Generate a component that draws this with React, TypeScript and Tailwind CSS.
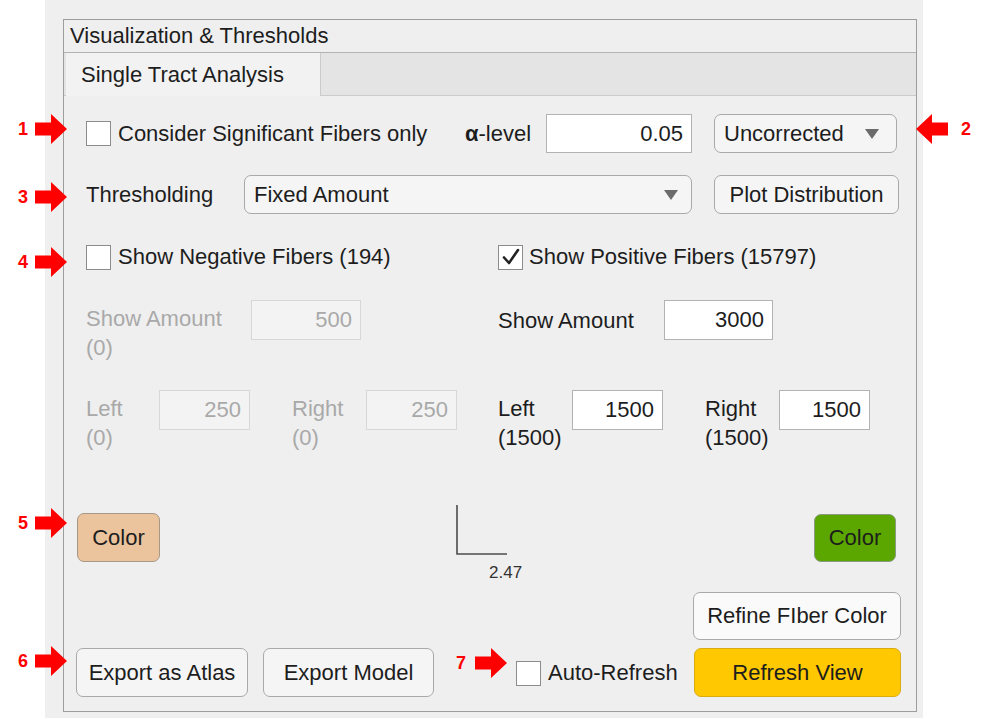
import React from "react";

const Tri = () => (
  <svg width="14" height="10" viewBox="0 0 14 10" className="shrink-0">
    <polygon points="0,0 14,0 7,10" fill="#6b6b6b" />
  </svg>
);

const Check = ({ checked = false }: { checked?: boolean }) => (
  <div className="w-[25px] h-[25px] shrink-0 bg-white border-[1.5px] border-[#8c8c8c] flex items-center justify-center">
    {checked && (
      <svg width="20" height="18" viewBox="0 0 20 18">
        <path d="M3 9.5 L8 15 L17 2" fill="none" stroke="#222" strokeWidth="2.6" strokeLinecap="round" strokeLinejoin="round" />
      </svg>
    )}
  </div>
);

const Arrow = ({ left = false }: { left?: boolean }) => (
  <svg width="32" height="30" viewBox="0 0 32 30" style={{ transform: left ? "scaleX(-1)" : undefined }}>
    <polygon points="0,8.5 16,8.5 16,0 32,15 16,30 16,21.5 0,21.5" fill="#ff0000" />
  </svg>
);

const Num = ({ children }: { children: React.ReactNode }) => (
  <span className="text-[#ff0000] font-bold text-[18px] leading-none font-['Liberation_Sans',Arial,sans-serif]">{children}</span>
);

const Field = ({ value, w, disabled = false }: { value: string; w: string; disabled?: boolean }) => (
  <div
    className={
      "h-[40px] shrink-0 flex items-center justify-end pr-[8px] border " +
      w +
      (disabled ? " bg-[#f3f3f3] border-[#d7d7d7] text-[#a9a9a9]" : " bg-white border-[#b3b3b3] text-[#1d1d1d]")
    }
  >
    {value}
  </div>
);

export default function App() {
  return (
    <div className="relative w-[988px] h-[718px] bg-white overflow-hidden text-[22px] text-[#1d1d1d] font-['Liberation_Sans',Arial,sans-serif] leading-none">
      <div className="ml-[45px] w-[878px] h-[718px] bg-[#efefef] pt-[19px] pl-[18px]">
        <div className="w-[854px] h-[693px] border border-[#9d9d9d] flex flex-col">
          <div className="h-[33px] border-b border-[#b3b3b3] pl-[6px] flex items-center">Visualization &amp; Thresholds</div>
          <div className="h-[43px] flex bg-[#e4e4e4] border-b border-[#cbcbcb] pl-[2px]">
            <div className="w-[255px] h-[43px] bg-[#f2f2f2] border-r border-[#cbcbcb] pl-[15px] flex items-center">
              Single Tract Analysis
            </div>
          </div>
          <div className="flex-1 flex flex-col pl-[13px] pr-[15px]">
            {/* Row 1 */}
            <div className="mt-[18px] h-[39px] flex items-center">
              <div className="w-[388px] pl-[9px] flex items-center">
                <Check />
                <span className="ml-[7px]">Consider Significant Fibers only</span>
              </div>
              <span className="w-[81px]">
                <b>α</b>-level
              </span>
              <div className="w-[146px] h-[39px] bg-white border border-[#b3b3b3] flex items-center justify-end pr-[8px]">0.05</div>
              <div className="ml-[22px] w-[183px] h-[39px] rounded-[7px] bg-[#f5f5f5] border border-[#a9a9a9] flex items-center justify-between pl-[9px] pr-[17px]">
                <span>Uncorrected</span>
                <Tri />
              </div>
            </div>
            {/* Row 2 */}
            <div className="mt-[22px] h-[39px] flex items-center">
              <span className="w-[167px] pl-[9px]">Thresholding</span>
              <div className="w-[448px] h-[39px] rounded-[7px] bg-[#f5f5f5] border border-[#a9a9a9] flex items-center justify-between pl-[9px] pr-[13px]">
                <span>Fixed Amount</span>
                <Tri />
              </div>
              <div className="ml-[22px] w-[185px] h-[39px] rounded-[7px] bg-[#f5f5f5] border border-[#a9a9a9] flex items-center justify-center">
                Plot Distribution
              </div>
            </div>
            {/* Row 3 */}
            <div className="mt-[30px] h-[26px] flex items-center">
              <div className="w-[421px] pl-[9px] flex items-center">
                <Check />
                <span className="ml-[7px]">Show Negative Fibers (194)</span>
              </div>
              <div className="flex items-center">
                <Check checked />
                <span className="ml-[6px]">Show Positive Fibers (15797)</span>
              </div>
            </div>
            {/* Row 4 */}
            <div className="mt-[30px] h-[90px] flex items-start">
              <div className="w-[421px] pl-[9px] flex items-start">
                <div className="w-[165px] pt-[4px] leading-[29px] text-[#a9a9a9]">
                  <div>Show Amount</div>
                  <div>(0)</div>
                </div>
                <Field value="500" w="w-[110px]" disabled />
              </div>
              <div className="flex items-start">
                <div className="w-[166px] pt-[6px] leading-[29px]">Show Amount</div>
                <Field value="3000" w="w-[109px]" />
              </div>
            </div>
            {/* Row 5 */}
            <div className="h-[115px] flex items-start">
              <div className="w-[421px] pl-[9px] flex items-start text-[#a9a9a9]">
                <div className="w-[73px] pt-[4px] leading-[29px]">
                  <div>Left</div>
                  <div>(0)</div>
                </div>
                <Field value="250" w="w-[91px]" disabled />
                <div className="ml-[42px] w-[74px] pt-[4px] leading-[29px]">
                  <div>Right</div>
                  <div>(0)</div>
                </div>
                <Field value="250" w="w-[91px]" disabled />
              </div>
              <div className="flex items-start">
                <div className="w-[74px] pt-[4px] leading-[29px]">
                  <div>Left</div>
                  <div>(1500)</div>
                </div>
                <Field value="1500" w="w-[91px]" />
                <div className="ml-[42px] w-[74px] pt-[4px] leading-[29px]">
                  <div>Right</div>
                  <div>(1500)</div>
                </div>
                <Field value="1500" w="w-[91px]" />
              </div>
            </div>
            {/* Row 6 */}
            <div className="h-[87px] flex items-start">
              <div className="mt-[8px] w-[83px] h-[49px] rounded-[7px] bg-[#ebc49d] border border-[#a89888] flex items-center justify-center">
                Color
              </div>
              <div className="ml-[296px] w-[70px] flex flex-col">
                <svg width="52" height="50" viewBox="0 0 52 50">
                  <path d="M1 0 L1 49 L51 49" fill="none" stroke="#4d4d4d" strokeWidth="1.6" />
                </svg>
                <span className="mt-[8px] ml-[33px] text-[17px] leading-[20px] text-[#333]">2.47</span>
              </div>
              <div className="ml-auto mr-[5px] mt-[9px] w-[82px] h-[48px] rounded-[7px] bg-[#5ba700] border border-[#8a9a80] flex items-center justify-center">
                Color
              </div>
            </div>
            {/* Row 7 */}
            <div className="h-[48px] flex justify-end">
              <div className="w-[208px] h-[48px] rounded-[7px] bg-[#fafafa] border border-[#a9a9a9] flex items-center justify-center">
                Refine FIber Color
              </div>
            </div>
            {/* Row 8 */}
            <div className="mt-[8px] h-[49px] flex items-center">
              <div className="-ml-[1px] w-[172px] h-[49px] rounded-[7px] bg-[#f5f5f5] border border-[#a9a9a9] flex items-center justify-center">
                Export as Atlas
              </div>
              <div className="ml-[15px] w-[171px] h-[49px] rounded-[7px] bg-[#f5f5f5] border border-[#a9a9a9] flex items-center justify-center">
                Export Model
              </div>
              <div className="ml-[82px] mt-[2px]">
                <Check />
              </div>
              <span className="ml-[7px]">Auto-Refresh</span>
              <div className="ml-auto w-[207px] h-[49px] rounded-[7px] bg-[#ffc800] border border-[#d9ad10] flex items-center justify-center">
                Refresh View
              </div>
            </div>
          </div>
        </div>
      </div>

      {/* Annotations */}
      <div className="absolute left-[18px] top-[114px] flex items-center gap-[7px]">
        <Num>1</Num>
        <Arrow />
      </div>
      <div className="absolute left-[916px] top-[114px] flex items-center gap-[13px]">
        <Arrow left />
        <Num>2</Num>
      </div>
      <div className="absolute left-[18px] top-[182px] flex items-center gap-[7px]">
        <Num>3</Num>
        <Arrow />
      </div>
      <div className="absolute left-[18px] top-[247px] flex items-center gap-[7px]">
        <Num>4</Num>
        <Arrow />
      </div>
      <div className="absolute left-[18px] top-[508px] flex items-center gap-[7px]">
        <Num>5</Num>
        <Arrow />
      </div>
      <div className="absolute left-[18px] top-[646px] flex items-center gap-[7px]">
        <Num>6</Num>
        <Arrow />
      </div>
      <div className="absolute left-[456px] top-[648px] flex items-center gap-[9px]">
        <Num>7</Num>
        <Arrow />
      </div>
    </div>
  );
}
